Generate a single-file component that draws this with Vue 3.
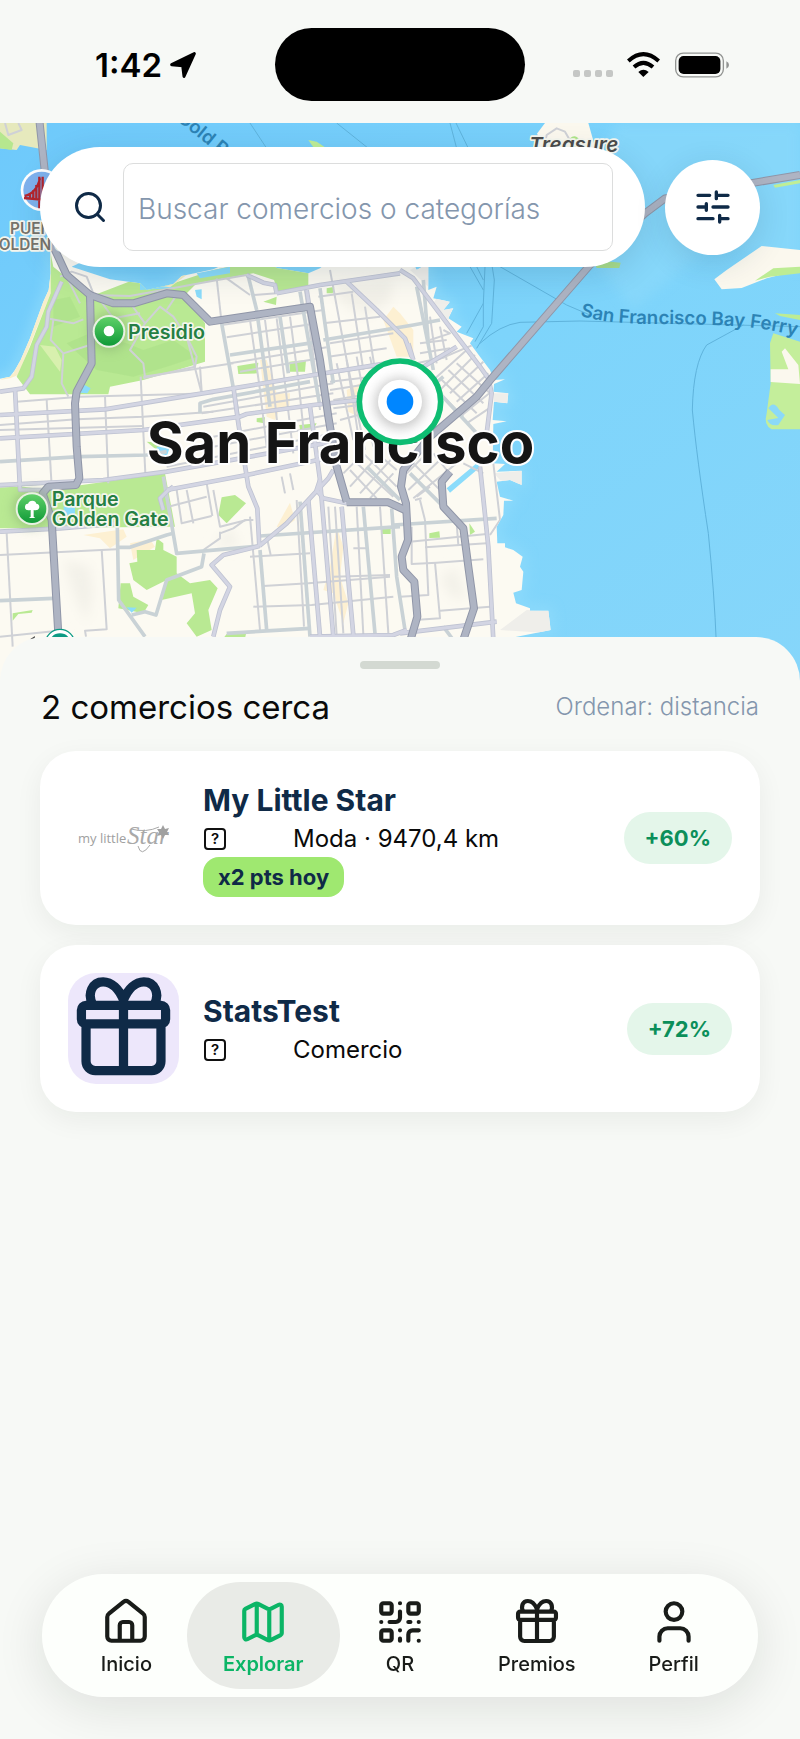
<script setup>
import { ref } from 'vue'

const query = ref('')
const active = ref('Explorar')

const shops = [
  { name: 'My Little Star', meta: 'Moda · 9470,4 km', tag: 'x2 pts hoy', points: '+60%', logo: 'star' },
  { name: 'StatsTest', meta: 'Comercio', tag: '', points: '+72%', logo: 'gift' },
]

const gift =
  'M3.9 7h16.2a1 1 0 0 1 1 1v2a1 1 0 0 1-1 1H3.9a1 1 0 0 1-1-1V8a1 1 0 0 1 1-1z M3.9 11v8.1a2 2 0 0 0 2 2h12.2a2 2 0 0 0 2-2V11 M12 7v14 M5.4 7C4 4.4 5.3 1.9 7.6 1.9 C9.4 1.9 11 3.4 12 5.8 C13 3.4 14.6 1.9 16.4 1.9 C18.7 1.9 20 4.4 18.6 7'

const tabs = [
  {
    label: 'Inicio',
    d: 'M3 9.6Q3 8.6 3.8 8L10.8 2.3Q12 1.4 13.2 2.3L20.2 8Q21 8.6 21 9.6V19a2 2 0 0 1-2 2H5a2 2 0 0 1-2-2z M9 21v-7.5A1.5 1.5 0 0 1 10.500 12h3A1.5 1.5 0 0 1 15 13.500V21',
  },
  {
    label: 'Explorar',
    d: 'M14.106 5.553a2 2 0 0 0 1.788 0l3.659-1.83A1 1 0 0 1 21 4.619v12.764a1 1 0 0 1-.553.894l-4.553 2.277a2 2 0 0 1-1.788 0l-4.212-2.106a2 2 0 0 0-1.788 0l-3.659 1.83A1 1 0 0 1 3 19.381V6.618a1 1 0 0 1 .553-.894l4.553-2.277a2 2 0 0 1 1.788 0z M15 5.764v15 M9 3.236v15',
  },
  {
    label: 'QR',
    d: 'M4 3h3a1 1 0 0 1 1 1v3a1 1 0 0 1-1 1H4a1 1 0 0 1-1-1V4a1 1 0 0 1 1-1z M17 3h3a1 1 0 0 1 1 1v3a1 1 0 0 1-1 1h-3a1 1 0 0 1-1-1V4a1 1 0 0 1 1-1z M4 16h3a1 1 0 0 1 1 1v3a1 1 0 0 1-1 1H4a1 1 0 0 1-1-1v-3a1 1 0 0 1 1-1z M21 16h-3a2 2 0 0 0-2 2v3 M21 21v.01 M12 7v3a2 2 0 0 1-2 2H7 M3 12h.01 M12 3h.01 M12 16v.01 M16 12h1 M21 12v.01 M12 21v-1',
  },
  { label: 'Premios', d: gift },
  { label: 'Perfil', d: 'M19 21v-2a4 4 0 0 0-4-4H9a4 4 0 0 0-4 4v2 M16 7a4 4 0 1 1-8 0a4 4 0 0 1 8 0z' },
]

const land =
  'M0 356L30 350 45 330 62 300 90 235 108 185 130 125 146 90 152 40 150 -60 300 -20 215 20 330 58 420 70 440 90 520 72 545 48 640 28 700 0 800 0 830 24 925 40 960 25 1000 -10 1230 -10 1250 30 1285 10 1285 90 1310 80 1300 115 1350 125 1330 150 1360 145 1345 175 1385 200 1370 215 1420 235 1410 250 1440 290 1470 330 1482 360 1515 358 1482 372 1480 395 1525 400 1522 430 1482 425 1478 480 1520 484 1480 492 1478 610 1515 612 1490 635 1565 632 1565 675 1530 660 1490 665 1500 710 1540 722 1512 722 1510 765 1490 800 1492 850 1515 850 1515 862 1540 870 1568 890 1560 920 1570 935 1565 990 1540 998 1548 1030 1590 1045 1590 1052 1645 1052 1652 1110 1500 1140 1500 1300 0 1300z'

const minor = [
  'M50 425L240 410 640 400', 'M0 495L230 478 430 470 640 455', 'M0 510L430 498', 'M0 680L160 670', 'M140 420L155 680', 'M315 410L325 670', 'M422 350L436 640', 'M430 350L600 325 700 310',
  'M600 320L605 395', 'M560 230L605 400', 'M20 820L38 1160', 'M0 885L350 868', 'M305 868L320 1108 255 1112 258 1130', 'M0 1130L175 1112',
  'M270 105L390 108 640 62 740 45', 'M140 175L220 190 250 178', 'M160 180L152 240 190 280 185 370 205 410', 'M190 280L270 255', 'M395 135L435 190 390 270 430 310 435 350', 'M435 190L480 140 520 170 560 230 590 290 585 320 430 355', 'M500 150L530 105', 'M300 120L340 175 420 160', 'M205 60L240 130', 'M180 50L215 35 260 50 280 100',
  'M650 55L665 190', 'M680 55L750 105', 'M760 105L830 100', 'M665 195L970 150', 'M680 232L950 190', 'M690 310L980 262', 'M720 335L960 295', 'M610 440L1000 370', 'M605 460L1000 400', 'M640 530L1010 460', 'M640 560L1010 490', 'M700 600L1010 540', 'M500 620L1000 520',
  'M750 180L780 390 800 560', 'M795 180L820 380 835 520', 'M830 175L855 370 880 580', 'M870 170L895 360 920 600', 'M915 90L935 250 960 450', 'M990 30L1040 300 1080 560', 'M1055 100L1090 330', 'M1095 140L1125 330', 'M955 110L1060 95', 'M970 190L1140 170', 'M990 250L1180 220',
  'M985 290L1160 265', 'M990 340L1160 315', 'M990 365L1160 345', 'M990 390L1120 370', 'M1000 420L1120 400', 'M1000 445L1120 430', 'M1020 480L1130 450', 'M1010 310L1060 540', 'M1040 300L1095 570', 'M1070 290L1120 560', 'M1110 290L1140 430',
  'M1290 240L1350 220 1330 210', 'M1260 250L1340 240', 'M1260 280L1350 265', 'M1250 310L1340 290', 'M1290 170L1310 310', 'M1320 200L1340 300', 'M1240 330L1430 250',
  'M1300 360L1400 270', 'M1320 390L1425 285', 'M1350 400L1450 305', 'M1370 425L1465 340', 'M1380 470L1480 390', 'M1400 490L1475 440', 'M1370 310L1470 400', 'M1345 330L1450 430', 'M1320 355L1430 460', 'M1300 380L1390 470',
  'M1030 640L1080 590', 'M1050 680L1150 570', 'M1080 700L1190 580', 'M1110 715L1180 640', 'M1060 600L1180 710', 'M1090 580L1190 680', 'M1120 570L1190 630', 'M1050 630L1130 715',
  'M1220 640L1280 580', 'M1225 690L1330 590', 'M1240 715L1370 610', 'M1250 710L1290 680', 'M1230 600L1330 700', 'M1300 580L1340 630', 'M1390 610L1450 640',
  'M530 690L545 790 635 768', 'M505 740L620 710', 'M560 690L580 790', 'M620 670L637 768', 'M640 690L660 800 740 780', 'M660 820L700 805 735 780 760 780', 'M610 870L660 835 660 815',
  'M750 770L780 1110', 'M800 830L812 885', 'M750 890L930 880', 'M790 978L925 970 1170 950', 'M760 1040L935 1035 1180 1010', 'M890 720L912 1100', 'M985 740L1010 1125', 'M1005 740L1030 1120', 'M1070 740L1090 1125', 'M1140 740L1165 1120', 'M1060 865L1100 865', 'M1000 950L1170 945', 'M845 650L855 700', 'M870 640L880 690',
  'M1230 845L1460 822', 'M1275 862L1460 850', 'M1235 800L1235 912 1310 908 1450 898', 'M1275 780L1285 1005 1200 1010', 'M1305 908L1320 1075 1245 1080', 'M1320 1052L1470 1040', 'M1370 790L1375 855', 'M1260 720L1275 780', 'M1480 610L1500 780 1470 825', 'M1245 720L1265 715',
]

const streets = [
  'M0 605L240 590 440 585 500 575', 'M0 1022L160 1015', 'M352 800L356 1020 435 1130', 'M395 1065L435 1055 468 1065 500 960 605 920 612 880', 'M355 862L390 862 500 825 520 820', 'M490 650L530 880 780 858', 'M665 190L710 440 730 600', 'M745 50L770 150', 'M770 150L810 440', 'M840 170L865 340', 'M690 285L940 248', 'M970 240L1240 195 1320 180', 'M780 828L1200 800', 'M960 85L1000 370', 'M900 95L960 440', 'M600 460L600 430 640 418 930 365', 'M900 725L930 1130', 'M1090 740L1125 1120', 'M1175 745L1190 950 1215 1110', 'M1180 795L1490 775', 'M1230 640L1330 740', 'M680 1120L930 1105', 'M1250 80L1300 330', 'M1270 60L1285 250', 'M1310 390L1430 520', 'M1260 410L1330 350', 'M1100 620L1200 720', 'M780 870L800 1110', 'M1330 1100L1360 1140',
]

const avenues = [
  'M45 385L60 690 125 690', 'M0 395L70 385 95 350 110 255 140 200 145 155 185 65', 'M0 465L315 448 700 385 940 345 1160 310', 'M0 535L430 510 720 470 740 462 940 435 1120 415', 'M0 675L310 660 500 635 1000 545', 'M500 690L740 645 1000 590', 'M520 680L500 695 480 715 490 750', 'M0 815L180 805 360 790', 'M700 380L715 490 745 680 772 745 778 858', 'M778 858L860 790 985 655 1000 630', 'M778 858L670 885 635 915 690 980 660 1050 640 1130', 'M830 100L960 75 1200 40', 'M740 45L790 68 825 75 830 100', 'M1040 65L1130 150 1215 235 1235 290', 'M1200 30L1240 55 1345 195 1440 320 1465 355 1475 400 1460 520', 'M920 90L960 340', 'M930 440L960 660 1000 1130', 'M1025 740L1060 1125', 'M925 720L960 1130', 'M960 660L950 690 970 715 1040 730', 'M1440 620L1465 860 1480 1140', 'M1200 1120L1490 1085', 'M930 1130L1180 1125 1220 1110', 'M1225 250L1240 300', 'M1220 350L1370 260',
]

const highways = [
  'M118 -420L135 -260 150 -100 165 -30 200 45 270 105', 'M270 105L275 310 230 395 225 430 230 560 238 655 228 675 145 680 128 700 155 780 176 1140', 'M270 105L340 130 400 130 500 100 550 105 630 185 930 140 960 300 985 470 1010 620 1040 725', 'M1040 727L1165 727 1215 750', 'M1770 15L1475 355 1430 410 1290 530 1210 630 1203 680 1218 730 1224 840 1205 890 1210 930 1243 965 1252 1070 1230 1145', 'M1350 635L1325 665 1330 740 1390 805 1405 920 1422 1045 1388 1145', 'M1770 15L1935 -140 1995 -185 2250 -230 2400 -255',
]

const parks = [
  'M152 -20L160 20 270 110 400 60 520 70 640 30 830 -10 925 0 925 82 835 98 822 60 760 40 590 70 555 105 615 190 615 305 430 360 330 380 325 403 90 403 50 350 90 260 152 100z',
  'M0 682L70 680 140 690 495 640 525 800 0 805z', 'M665 712L705 705 738 730 680 790 655 765z', 'M410 870L465 870 470 835 490 850 490 870 530 890 530 940 570 970 630 960 653 985 625 1050 635 1110 590 1130 560 1090 585 1060 575 1000 485 1020 500 960 440 990 400 960 388 910 412 905z',
  'M362 970L390 970 400 1010 445 1035 430 1060 355 1045z', 'M712 318L775 308 772 340 715 342z', 'M868 305L918 300 915 335 870 335z', 'M790 125L830 110 828 135z', 'M1145 805L1172 805 1172 822 1145 822z', 'M770 475L795 472 793 490 770 486z', 'M898 495L950 490 940 508 900 510z', 'M1288 820L1318 814 1320 833 1288 834z', 'M1618 874L1638 874 1638 896 1618 898z', 'M1408 790L1425 815 1410 825z', 'M440 545L500 550 470 570z', 'M38 1060L98 1050 95 1058 55 1062 38 1082z', 'M680 1122L738 1122 735 1135 670 1135z', 'M980 85L1003 80 998 100 980 100z',
]

const zones = [
  'M780 300L800 300 830 400 870 400 868 440 840 445 825 480 800 470z', 'M1150 180L1180 140 1200 160 1240 210 1240 290 1190 290z', 'M250 825L370 808 380 830 330 865 300 835z', 'M830 800L870 728 885 780 850 805z', 'M990 920L1010 800 1030 860 1020 950 1045 1030 1030 1090 1000 1000 970 990z', 'M390 850L450 838 465 860 400 900z', 'M1040 390L1080 370 1075 470 1045 455z',
]
</script>

<template>
  <div class="screen">
    <header class="status">
      <div class="status-left">
        <time>1:42</time>
        <svg class="locate" viewBox="0 0 78 78" aria-hidden="true"><path d="M73 5L42 73 38 41 5 38z" fill="#000" stroke="#000" stroke-width="9" stroke-linejoin="round" /></svg>
      </div>
      <div class="island"></div>
      <div class="status-right">
        <span class="dots"><i v-for="n in 4" :key="n"></i></span>
        <svg class="wifi" viewBox="0 0 99 75" aria-hidden="true">
          <path d="M4 27Q49-14 95 27" fill="none" stroke="#000" stroke-width="12" />
          <path d="M21 45Q49 20 78 45" fill="none" stroke="#000" stroke-width="12" />
          <path d="M34 60Q49 46 65 60L49 75z" />
        </svg>
        <svg class="battery" viewBox="0 0 163 76" aria-hidden="true">
          <rect x="2" y="2" width="144" height="72" rx="23" fill="none" stroke="#929492" stroke-width="4" />
          <rect x="11" y="11" width="126" height="54" rx="15" />
          <path d="M155 27Q163 30 163 38T155 49z" fill="#929492" />
        </svg>
      </div>
    </header>

    <section class="map" aria-label="Mapa">
      <svg class="map-art" viewBox="0 -411 2400 1680" preserveAspectRatio="xMidYMin slice">
        <defs>
          <clipPath id="land-clip"><path :d="land" /></clipPath>
          <linearGradient id="pin" x2="0" y2="1"><stop stop-color="#5fd068" /><stop offset="1" stop-color="#109a38" /></linearGradient>
          <linearGradient id="sea" x2="1" y2="1"><stop stop-color="#6ec9fb" /><stop offset=".5" stop-color="#7dd4fb" /><stop offset="1" stop-color="#86d6fa" /></linearGradient>
          <filter id="soft" x="-50%" y="-50%" width="200%" height="200%"><feGaussianBlur stdDeviation="18" /></filter>
          <path id="ferry" d="M1740 168Q1830 192 1960 192T2200 198T2440 240" />
          <path id="cold" d="M529 -421L760 -235" />
        </defs>
        <rect y="-411" width="2400" height="1680" fill="url(#sea)" />
        <path d="M2400 -411L2400 30 2150 -60 1900 150 1700 -100 1850 -411z" fill="#8cd9fa" opacity=".6" filter="url(#soft)" />
        <path :d="land" fill="none" stroke="#8fdcfc" stroke-width="20" filter="url(#soft)" />
        <g class="ferry-lines">
          <path d="M750 -411L800 -335M1010 -411L1105 -335M1350 -411L1370 -335M1368 -411L1405 -335M1500 20L1700 135 1770 165M1440 250Q1500 195 1560 187L1740 183 2400 200M2230 195L2120 255Q2080 310 2077 450 2090 590 2125 820 2143 1000 2149 1150M1410 20L1450 90M1455 20L1450 130 1400 220M1475 10L1483 60 1475 190 1430 265M1430 20L1450 60M1450 130L1450 200 1425 245" />
        </g>
        <path d="M0 -411L140 -411 140 -330 60 -345 50 -330 0 -335z" fill="#e6e9bd" />
        <path d="M0 -385L40 -350 35 -330 0 -335z" fill="#b6e78f" />
        <path d="M15 -411L25 -375 65 -390 55 -411" class="minor" />
        <path d="M925 -360L950 -355 975 -338 940 -338z" fill="#c0ee96" />
        <path d="M1612 -380L1635 -411 1765 -411 1785 -340 1780 -300 1620 -300z" fill="#fbf8ee" />
        <path d="M1630 -330L1640 -375 1670 -395 1695 -385 1715 -350" class="minor" />
        <path d="M1710 -365Q1725 -380 1740 -360L1735 -340 1715 -340z" fill="#aee58a" />
        <path d="M1780 0L1862 8 1858 24 1790 24z" fill="#a9dd8b" />
        <path d="M2143 58L2180 30 2285 -42 2400 -30 2400 30 2300 55 2225 84 2165 88z" fill="#fbf8ee" />
        <path d="M2265 62L2320 25 2400 20 2400 40 2310 50zM2325 160L2400 165 2400 180 2340 168z" fill="#bdec94" />
        <path d="M2320 -225L2400 -240 2400 -230 2325 -217z" fill="#c0ee96" />
        <path d="M2320 220L2400 245 2400 508 2315 508Q2290 495 2300 460L2312 370 2310 250z" fill="#c4ee9b" />
        <path d="M2345 275L2355 265 2395 315 2400 372 2312 366 2312 328 2365 328z" fill="#fbf8ee" />
        <path d="M2305 445Q2320 420 2338 450L2355 465 2335 495Q2310 500 2302 480L2335 474z" fill="#8bd9f8" />

        <path :d="land" fill="#fcfaf2" />
        <g clip-path="url(#land-clip)">
          <path d="M1285 0L1285 80 1230 30zM1320 100L1360 140 1345 180 1300 130zM1482 640L1565 632 1565 675 1500 660zM1482 400L1525 400 1522 430 1482 430zM1500 1110L1580 1050 1652 1052 1652 1120z" fill="#efeeea" />
          <path d="M190 900L270 920 280 1000 260 1090 220 1000zM1000 70L1180 60 1170 130 1100 170 1020 130zM690 800L720 860 640 860zM1320 950L1370 920 1400 1020 1350 1010z" fill="#f3f1e9" filter="url(#soft)" />
          <path d="M152 -20L152 100 100 230 55 345 30 355 0 360 40 340 90 200 140 90z" fill="#f7eecb" />
          <path v-for="d in zones" :key="d" :d="d" fill="#fdf0d2" />
          <path v-for="d in parks" :key="d" :d="d" fill="#b9e993" />
          <path d="M200 250L270 220 380 250 430 270 520 240 590 290 500 320 400 350 290 330zM160 120L210 110 240 170 160 200z" fill="#a9de86" opacity=".55" />
          <path d="M120 255L165 260 185 300 180 335z" fill="#d8f0ae" />
          <path d="M245 370L272 385 262 400 240 398zM585 90L605 88 605 118 590 110zM380 1042L410 1043 395 1058zM190 740L225 740 225 765 195 765zM420 70L500 65 520 85 420 90zM590 40L690 20 690 40 600 55z" fill="#8bdcfb" />
          <path d="M410 68L510 82 560 45 530 42 510 72z" fill="#f3ecc4" />
          <path d="M470 560L510 560 500 590 475 590zM1340 685L1430 610 1440 622 1350 698z" fill="#8bdcfb" />
          <path v-for="d in minor" :key="d" :d="d" class="minor" />
          <path v-for="d in streets" :key="d" :d="d" class="street" />
          <path v-for="d in avenues" :key="d" :d="d" class="avenue-edge" />
          <path v-for="d in avenues" :key="d + 'f'" :d="d" class="avenue" />
        </g>
        <path v-for="d in highways" :key="d" :d="d" class="highway-edge" />
        <path v-for="d in highways" :key="d + 'f'" :d="d" class="highway" />

        <circle cx="125" cy="-210" r="63" fill="#fff" />
        <circle cx="125" cy="-210" r="55" fill="#7fb2ee" />
        <path d="M72 -186L180 -176M118 -250V-155M128 -250V-155M120 -245Q110 -200 74 -192M90 -200V-186M100 -210V-184M109 -225V-182" fill="none" stroke="#b5252d" stroke-width="7" />

        <text x="30" y="-77" class="place small">PUENTE</text>
        <text x="-38" y="-30" class="place small">GOLDEN GATE</text>
        <text class="sea-label"><textPath href="#cold">Gold Rush</textPath></text>
        <text x="1588" y="-325" class="place isle">Treasure</text>
        <text class="sea-label ferry"><textPath href="#ferry">San Francisco Bay Ferry</textPath></text>

        <circle cx="327" cy="214" r="56" fill="#7ba069" opacity=".5" filter="url(#soft)" />
        <circle cx="327" cy="214" r="49" fill="#e9f1e3" />
        <circle cx="327" cy="214" r="43" fill="url(#pin)" />
        <circle cx="327" cy="213" r="16" fill="#fff" />
        <text x="384" y="237" class="place park">Presidio</text>

        <circle cx="96" cy="746" r="56" fill="#7ba069" opacity=".5" filter="url(#soft)" />
        <circle cx="96" cy="746" r="49" fill="#e9f1e3" />
        <circle cx="96" cy="746" r="43" fill="url(#pin)" />
        <path d="M92 770L92 750Q74 754 75 740 76 730 84 731 87 722 97 722 107 722 109 731 118 731 118 742 116 753 101 750L101 770 106 774 87 774z" fill="#fff" />
        <text x="155" y="738" class="place park">Parque</text>
        <text x="155" y="798" class="place park">Golden Gate</text>

        <circle cx="180" cy="1152" r="44" fill="#fff" stroke="#0c9b84" stroke-width="4" />
        <circle cx="180" cy="1154" r="34" fill="#0c9b84" />
        <path d="M90 1138L105 1128 103 1140z" fill="#444" />
        <text x="440" y="610" class="city">San Francisco</text>

        <circle cx="1200" cy="425" r="122" fill="#fff" stroke="#0ebd72" stroke-width="17" />
        <circle cx="1200" cy="430" r="75" fill="#999" opacity=".55" filter="url(#soft)" />
        <circle cx="1200" cy="425" r="66" fill="#fff" />
        <circle cx="1200" cy="425" r="40" fill="#0086ff" />
      </svg>

      <div class="tools">
        <div class="search">
          <svg class="search-icon" viewBox="0 0 24 24" aria-hidden="true"><path d="M21 21l-4.340-4.340M19 11a8 8 0 1 1-16 0a8 8 0 0 1 16 0z" /></svg>
          <input v-model="query" type="text" aria-label="Buscar comercios o categorías" placeholder="Buscar comercios o categorías" />
        </div>
        <button class="filter" type="button" aria-label="Filtros">
          <svg viewBox="0 0 24 24" aria-hidden="true"><path d="M10 5H3M12 19H3M14 3v4M16 17v4M21 12h-9M21 19h-5M21 5h-7M8 10v4M8 12H3" /></svg>
        </button>
      </div>
    </section>

    <main class="sheet">
      <div class="handle"></div>
      <div class="sheet-head">
        <h1>2 comercios cerca</h1>
        <button class="sort" type="button">Ordenar: distancia</button>
      </div>
      <ul class="list">
        <li v-for="shop in shops" :key="shop.name" class="card">
          <svg v-if="shop.logo === 'star'" class="logo" viewBox="0 0 111 111" role="img" aria-label="my little Star">
            <text x="10" y="60" class="logo-sans">my little</text>
            <text x="59" y="61" class="logo-script">Star</text>
            <path d="M63 46Q78 50 91 44M70 63Q73 75 82 62" fill="none" stroke="#a9a9a9" stroke-width="1" />
            <path d="M95 42l2 4 4-1-2 4 2 3-4 0-2 4-2-4-4 1 2-4-2-3 4 0z" fill="#a0a0a0" />
          </svg>
          <svg v-else class="logo gift" viewBox="0 0 24 24" aria-hidden="true"><path :d="gift" /></svg>
          <div class="info">
            <h2>{{ shop.name }}</h2>
            <p><span class="unknown">?</span>{{ shop.meta }}</p>
            <span v-if="shop.tag" class="tag">{{ shop.tag }}</span>
          </div>
          <span class="points">{{ shop.points }}</span>
        </li>
      </ul>
    </main>

    <nav class="tabs">
      <button v-for="tab in tabs" :key="tab.label" type="button" :class="['tab', { active: active === tab.label }]" @click="active = tab.label">
        <svg viewBox="0 0 24 24" aria-hidden="true"><path :d="tab.d" /></svg>
        <span>{{ tab.label }}</span>
      </button>
    </nav>
  </div>
</template>

<style>
body {
  margin: 0;
  background: #f7f9f6;
}
</style>

<style scoped>
* {
  box-sizing: border-box;
}
.screen {
  min-height: 100vh;
  display: flex;
  flex-direction: column;
  background: #f7f9f6;
  color: #0a0a0a;
  font-family: Inter, "Liberation Sans", sans-serif;
}
button {
  border: 0;
  padding: 0;
  font-family: inherit;
  cursor: pointer;
}
.status {
  display: grid;
  grid-template-columns: 1fr 250px 1fr;
  align-items: center;
  padding: 28px 0 22px;
}
.status-left {
  display: flex;
  align-items: center;
  gap: 8px;
  padding-left: 95px;
  font-size: 33px;
  line-height: 40px;
  font-weight: 600;
  color: #000;
}
.locate {
  width: 26px;
  height: 26px;
}
.island {
  height: 73px;
  border-radius: 37px;
  background: #000;
}
.status-right {
  display: flex;
  align-items: center;
  padding-left: 48px;
}
.dots {
  display: flex;
  gap: 4px;
  padding-top: 18px;
}
.dots i {
  width: 7px;
  height: 7px;
  border-radius: 2px;
  background: #c5c7c5;
}
.wifi {
  width: 33px;
  height: 25px;
  margin: 0 15px 0 14px;
}
.battery {
  width: 54px;
  height: 26px;
}
.map {
  position: relative;
  height: 560px;
  overflow: hidden;
}
.map-art {
  display: block;
  width: 100%;
  height: 100%;
}
.map-art path {
  stroke-linejoin: round;
}
.ferry-lines path {
  fill: none;
  stroke: #5fb3dc;
  stroke-width: 3;
}
.minor {
  fill: none;
  stroke: #cfd1d6;
  stroke-width: 6;
}
.street {
  fill: none;
  stroke: #c9d2d6;
  stroke-width: 11;
}
.avenue-edge {
  fill: none;
  stroke: #bfc3d2;
  stroke-width: 14;
}
.avenue {
  fill: none;
  stroke: #d3d5e3;
  stroke-width: 9;
}
.highway-edge {
  fill: none;
  stroke: #9096a8;
  stroke-width: 24;
}
.highway {
  fill: none;
  stroke: #aeb4c3;
  stroke-width: 18;
}
.place {
  paint-order: stroke;
  stroke: #f5f6ee;
  stroke-width: 10px;
  stroke-linejoin: round;
  font-weight: 600;
}
.small {
  font-size: 46px;
  fill: #77736b;
}
.isle {
  font-size: 62px;
  font-style: italic;
  fill: #4c4c4c;
}
.park {
  font-size: 59px;
  fill: #257f43;
}
.sea-label {
  font-size: 56px;
  font-weight: 600;
  fill: #2c83b5;
}
.city {
  paint-order: stroke;
  stroke: #fff;
  stroke-width: 12px;
  stroke-linejoin: round;
  font-size: 169px;
  font-weight: 700;
  fill: #151515;
}
.tools {
  position: absolute;
  inset: 24px 40px auto;
  display: flex;
  align-items: center;
  gap: 20px;
}
.search {
  flex: 1;
  min-width: 0;
  display: flex;
  align-items: center;
  gap: 15px;
  height: 120px;
  padding: 0 32px;
  border-radius: 60px;
  background: #fff;
  box-shadow: 0 8px 32px rgba(20, 50, 70, 0.14);
}
.search-icon {
  flex: none;
  width: 36px;
  height: 36px;
}
.search-icon path,
.filter path,
.gift path,
.tab path {
  fill: none;
  stroke: currentColor;
  stroke-width: 2;
  stroke-linecap: round;
  stroke-linejoin: round;
}
.search-icon,
.filter,
.gift {
  color: #0f2a47;
}
.search input {
  flex: 1;
  min-width: 0;
  height: 88px;
  padding: 3px 14px 0;
  border: 1px solid #dcdddd;
  border-radius: 10px;
  background: #fff;
  font: 300 28px Inter, sans-serif;
  color: #0f2a47;
  outline: none;
}
.search input::placeholder {
  color: #8496ad;
  opacity: 1;
}
.filter {
  flex: none;
  display: grid;
  place-items: center;
  width: 95px;
  height: 95px;
  border-radius: 50%;
  background: #fff;
  box-shadow: 0 8px 32px rgba(20, 50, 70, 0.14);
}
.filter svg {
  width: 40px;
  height: 40px;
}
.sheet {
  position: relative;
  flex: 1;
  margin-top: -46px;
  padding: 24px 40px 190px;
  border-radius: 44px 44px 0 0;
  background: #f7f9f6;
}
.handle {
  width: 80px;
  height: 8px;
  margin: 0 auto 16px;
  border-radius: 4px;
  background: #d3d9d2;
}
.sheet-head {
  display: flex;
  justify-content: space-between;
  align-items: center;
  height: 44px;
  margin-bottom: 22px;
  padding: 0 1px;
}
h1 {
  margin: 0;
  font-size: 33px;
  line-height: 44px;
  font-weight: 400;
}
.sort {
  background: none;
  font-size: 24px;
  line-height: 32px;
  font-weight: 300;
  color: #8496ad;
}
.list {
  display: flex;
  flex-direction: column;
  gap: 20px;
  margin: 0;
  padding: 0;
  list-style: none;
}
.card {
  display: flex;
  align-items: center;
  padding: 28px;
  border-radius: 36px;
  background: #fff;
  box-shadow: 0 8px 28px rgba(20, 40, 20, 0.06);
}
.logo {
  flex: none;
  width: 111px;
  height: 111px;
  margin-right: 24px;
  border-radius: 28px;
}
.gift {
  background: #ede7fb;
}
.logo-sans {
  font: 400 13px "Open Sans", sans-serif;
  fill: #a0a0a0;
}
.logo-script {
  font: italic 400 25px "Liberation Serif", serif;
  fill: #a9a9a9;
}
.info {
  flex: 1;
  min-width: 0;
}
h2 {
  margin: 0;
  font-size: 30px;
  line-height: 42px;
  font-weight: 700;
  color: #0f2a47;
}
.info p {
  display: flex;
  align-items: center;
  margin: 0;
  font-size: 24px;
  line-height: 36px;
}
.unknown {
  width: 22px;
  height: 22px;
  margin: 0 67px 0 1px;
  border: 2px solid #111;
  border-radius: 4px;
  font-size: 15px;
  line-height: 18px;
  font-weight: 600;
  text-align: center;
}
.tag {
  display: inline-block;
  padding: 0 15px;
  border-radius: 16px;
  background: #9fe870;
  font-size: 22px;
  line-height: 40px;
  font-weight: 700;
  color: #0f2a47;
  vertical-align: top;
}
.points {
  padding: 0 21px;
  border-radius: 26px;
  background: #e4f6ea;
  font-size: 22px;
  line-height: 52px;
  font-weight: 700;
  color: #0b8f5a;
}
.tabs {
  position: fixed;
  inset: auto 42px 42px;
  display: flex;
  padding: 8px 16px;
  border-radius: 62px;
  background: #fdfffc;
  box-shadow: 0 10px 50px rgba(20, 30, 20, 0.11);
}
.tab {
  flex: 1;
  display: flex;
  flex-direction: column;
  align-items: center;
  gap: 4px;
  height: 107px;
  margin: 0 -8px;
  padding-top: 15px;
  border-radius: 54px;
  background: none;
  font-size: 20px;
  line-height: 26px;
  font-weight: 500;
  color: #191c19;
}
.tab svg {
  width: 50px;
  height: 50px;
}
.tab.active {
  background: #e9ebe7;
  font-weight: 600;
  color: #0bb566;
}
</style>
